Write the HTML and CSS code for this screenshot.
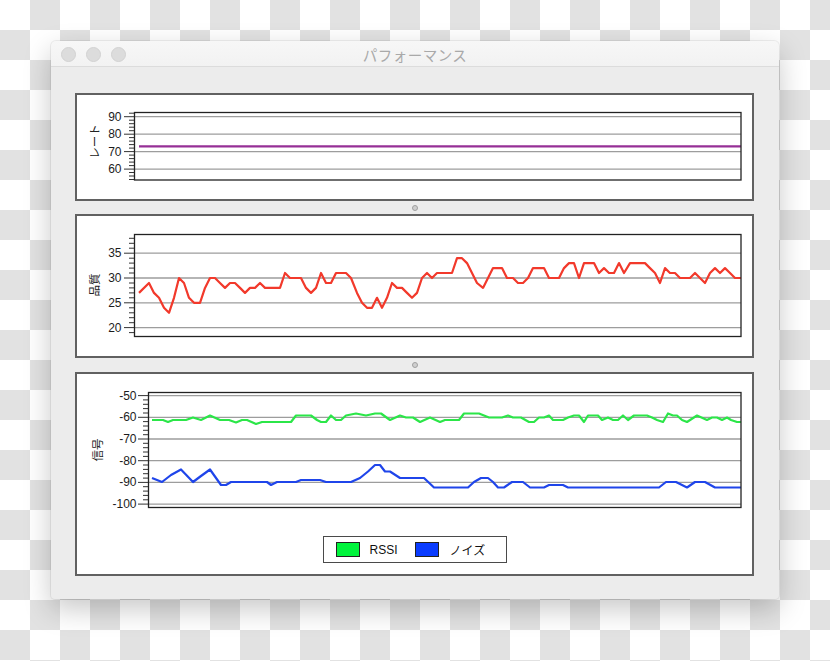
FILE: index.html
```html
<!DOCTYPE html>
<html lang="ja">
<head>
<meta charset="utf-8">
<title>パフォーマンス</title>
<link rel="stylesheet" href="styles.css">
</head>
<body>
<div class="stage">
  <div class="window">
    <div class="titlebar">
      <div class="lights">
        <span class="light"></span><span class="light"></span><span class="light"></span>
      </div>
      <div class="title">パフォーマンス</div>
      <div></div>
    </div>
    <div class="content">
      <section class="panel panel-rate">
        <svg class="chart" width="675" height="104" viewBox="77 95 675 104">
          <g class="grid">
            <line x1="134" x2="741" y1="116.7" y2="116.7"/>
            <line x1="134" x2="741" y1="134.2" y2="134.2"/>
            <line x1="134" x2="741" y1="151.6" y2="151.6"/>
            <line x1="134" x2="741" y1="169.1" y2="169.1"/>
          </g>
          <path class="ticks" d="M124 116.7H134M124 134.2H134M124 151.6H134M124 169.1H134
            M129 113.2H134M129 120.2H134M129 123.7H134M129 127.2H134M129 130.7H134
            M129 137.6H134M129 141.1H134M129 144.6H134M129 148.1H134
            M129 155.1H134M129 158.6H134M129 162.1H134M129 165.6H134
            M129 172.5H134M129 176H134M129 179.5H134"/>
          <g class="labels" text-anchor="end">
            <text x="121.5" y="116.7">90</text>
            <text x="121.5" y="134.2">80</text>
            <text x="121.5" y="151.6">70</text>
            <text x="121.5" y="169.1">60</text>
          </g>
          <text class="axis-title" x="94" y="141.5" transform="rotate(-90 94 141.5)">レート</text>
          <polyline class="line purple" points="139,146.3 741,146.3"/>
          <rect class="frame" x="134.5" y="112.5" width="606.5" height="67.5"/>
        </svg>
      </section>
      <div class="splitter"><span class="dot"></span></div>
      <section class="panel panel-quality">
        <svg class="chart" width="675" height="140" viewBox="77 216 675 140">
          <g class="grid">
            <line x1="134" x2="741" y1="253.2" y2="253.2"/>
            <line x1="134" x2="741" y1="278" y2="278"/>
            <line x1="134" x2="741" y1="302.8" y2="302.8"/>
            <line x1="134" x2="741" y1="327.6" y2="327.6"/>
          </g>
          <path class="ticks" d="M124 253.2H134M124 278H134M124 302.8H134M124 327.6H134
            M129 238.3H134M129 243.3H134M129 248.2H134
            M129 258.2H134M129 263.1H134M129 268.1H134M129 273H134
            M129 283H134M129 287.9H134M129 292.9H134M129 297.8H134
            M129 307.8H134M129 312.8H134M129 317.7H134M129 322.7H134
            M129 332.6H134"/>
          <g class="labels" text-anchor="end">
            <text x="121.5" y="253.2">35</text>
            <text x="121.5" y="278">30</text>
            <text x="121.5" y="302.8">25</text>
            <text x="121.5" y="327.6">20</text>
          </g>
          <text class="axis-title" x="94" y="285" transform="rotate(-90 94 285)">品質</text>
          <polyline class="line red" points="139,292.9 149,283 154,292.9 159,297.8 164,307.8 169,312.8 174,297.8 179,278 184,283 189,297.8 194,302.8 200,302.8 205,287.9 210,278 215,278 220,283 225,287.9 230,283 235,283 240,287.9 245,292.9 250,287.9 255,287.9 260,283 265,287.9 280,287.9 285,273 290,278 301,278 306,287.9 311,292.9 316,287.9 321,273 326,283 331,283 336,273 346,273 351,278 357,292.9 362,302.8 367,307.8 372,307.8 377,297.8 382,307.8 387,297.8 392,283 397,287.9 402,287.9 407,292.9 412,297.8 417,292.9 422,278 427,273 432,278 437,273 452,273 457,258.2 462,258.2 467,263.1 472,273 477,283 483,287.9 488,278 493,268.1 502,268.1 507,278 513,278 518,283 523,283 528,278 533,268.1 544,268.1 549,278 559,278 564,268.1 569,263.1 574,263.1 579,278 584,263.1 594,263.1 599,273 604,268.1 609,273 614,273 619,263.1 624,273 630,263.1 645,263.1 650,268.1 655,273 660,283 665,268.1 670,273 675,273 680,278 690,278 695,273 700,278 705,283 710,273 715,268.1 720,273 725,268.1 730,273 735,278 741,278"/>
          <rect class="frame" x="134.5" y="234.5" width="606.5" height="102"/>
        </svg>
      </section>
      <div class="splitter tall"><span class="dot"></span></div>
      <section class="panel panel-signal">
        <svg class="chart" width="675" height="162" viewBox="77 374 675 162">
          <g class="grid">
            <line x1="148" x2="741" y1="395.6" y2="395.6"/>
            <line x1="148" x2="741" y1="417.3" y2="417.3"/>
            <line x1="148" x2="741" y1="439" y2="439"/>
            <line x1="148" x2="741" y1="460.7" y2="460.7"/>
            <line x1="148" x2="741" y1="482.4" y2="482.4"/>
            <line x1="148" x2="741" y1="504.1" y2="504.1"/>
          </g>
          <path class="ticks" d="M138 395.6H148M138 417.3H148M138 439H148M138 460.7H148M138 482.4H148M138 504.1H148
            M143 399.9H148M143 404.3H148M143 408.6H148M143 413H148
            M143 421.6H148M143 426H148M143 430.3H148M143 434.7H148
            M143 443.3H148M143 447.7H148M143 452H148M143 456.4H148
            M143 465H148M143 469.4H148M143 473.7H148M143 478.1H148
            M143 486.7H148M143 491.1H148M143 495.4H148M143 499.8H148"/>
          <g class="labels" text-anchor="end">
            <text x="136.5" y="395.6">-50</text>
            <text x="136.5" y="417.3">-60</text>
            <text x="136.5" y="439">-70</text>
            <text x="136.5" y="460.7">-80</text>
            <text x="136.5" y="482.4">-90</text>
            <text x="136.5" y="504.1">-100</text>
          </g>
          <text class="axis-title" x="96.5" y="450" transform="rotate(-90 96.5 450)">信号</text>
          <polyline class="line green" points="152,420 163,420 168,422 173,420 186,420 193,417.5 201,420 210,415.5 220,420 229,420 236,422.5 242,420 247,420 256,424 262,422 291,422 296,415.5 311,415.5 317,420 321,422 326,422 331,415.5 336,420 341,420 346,415.5 356,413.5 366,415.5 375,413.5 381,413.5 390,420 400,415.5 406,417.5 413,417.5 420,422 430,417.5 440,422 445,420 459,420 464,413.5 479,413.5 489,417.5 502,417.5 508,415.5 513,417.5 521,417.5 529,422 534,422 539,417.5 544,417.5 549,415.5 553,420 563,420 568,417.5 574,415.5 579,415.5 584,422 588,415.5 598,415.5 602,420 608,417.5 613,420 618,420 623,415.5 628,420 634,415.5 647,415.5 652,417.5 657,420 663,422 668,413.5 673,415.5 677,415.5 682,420 687,422 697,415.5 707,420 712,417.5 717,417.5 722,420 727,417.5 731,420 737,422 741,422"/>
          <polyline class="line blue" points="152,478 162,482 171,475 181,469.5 193,482 201,476 210,469.5 221,485 226,485 231,482 267,482 271,485 277,482 296,482 301,480 320,480 326,482 351,482 360,478 368,471.5 375,465 380,465 385,471.5 390,471.5 400,478 424,478 434,487.5 468,487.5 474,482 481,478 488,478 493,482 498,487.5 504,487.5 512,482 523,482 530,487.5 544,487.5 549,485 563,485 568,487.5 659,487.5 666,482 676,482 687,487.5 695,482 705,482 715,487.5 741,487.5"/>
          <rect class="frame" x="148.5" y="392.5" width="592.5" height="115"/>
        </svg>
        <div class="legend">
          <span class="swatch swatch-rssi"></span><span class="legend-label">RSSI</span>
          <span class="swatch swatch-noise"></span><span class="legend-label">ノイズ</span>
        </div>
      </section>
    </div>
  </div>
</div>
</body>
</html>
```
FILE: styles.css
```css
html {
  background-color: #ffffff;
  background-image: repeating-conic-gradient(#e2e2e2 0 25%, #ffffff 0 50%);
  background-size: 60px 60px;
  background-position: 0 0;
}
body {
  margin: 0;
  min-height: 661px;
  font-family: "Liberation Sans", "Noto Sans CJK JP", sans-serif;
}
.stage {
  padding: 41px 0 0 51px;
}
.window {
  width: 728px;
  height: 558px;
  box-sizing: border-box;
  background: #ececec;
  border-radius: 5px 5px 4px 4px;
  box-shadow: 0 0 0 1px rgba(0,0,0,0.06), 0 10px 28px rgba(0,0,0,0.22);
  display: flex;
  flex-direction: column;
  overflow: hidden;
}
.titlebar {
  height: 25px;
  flex: none;
  background: linear-gradient(#f7f7f7, #f2f2f2);
  border-bottom: 1px solid #dcdcdc;
  display: grid;
  grid-template-columns: 1fr auto 1fr;
  align-items: center;
}
.lights {
  display: flex;
  gap: 10px;
  padding-left: 10px;
  padding-top: 2px;
}
.light {
  width: 13px;
  height: 13px;
  border-radius: 50%;
  background: #dcdcdc;
  border: 0.5px solid #d2d2d2;
}
.title {
  font-family: "Noto Sans CJK JP", sans-serif;
  font-size: 14.5px;
  color: #a9a9a9;
  padding-top: 2px;
  letter-spacing: 0.5px;
}
.content {
  flex: 1;
  padding: 26px 25px 23px 24px;
  display: flex;
  flex-direction: column;
}
.panel {
  background: #ffffff;
  border: 2px solid #616161;
  box-sizing: border-box;
  width: 679px;
}
.panel-rate { height: 108px; }
.panel-quality { height: 144px; }
.panel-signal {
  height: 204px;
  display: flex;
  flex-direction: column;
}
.chart {
  display: block;
  flex: none;
}
.splitter {
  height: 13px;
  display: flex;
  align-items: center;
  justify-content: center;
}
.splitter.tall { height: 14px; }
.dot {
  width: 6px;
  height: 6px;
  border-radius: 50%;
  background: #cfcfcf;
  border: 1px solid #a0a0a0;
  box-sizing: border-box;
}
.grid line {
  stroke: #9d9d9d;
  stroke-width: 1.3;
}
.ticks {
  stroke: #333;
  stroke-width: 1;
  fill: none;
}
.labels text {
  font-family: "Liberation Sans", sans-serif;
  font-size: 12px;
  fill: #1c1c1c;
  dominant-baseline: central;
}
.axis-title {
  font-family: "Noto Sans CJK JP", sans-serif;
  font-size: 11.5px;
  fill: #222;
  text-anchor: middle;
  dominant-baseline: central;
}
.frame {
  fill: none;
  stroke: #222;
  stroke-width: 1.3;
}
.line {
  fill: none;
  stroke-width: 2.2;
  stroke-linejoin: round;
}
.purple { stroke: #962f96; }
.red { stroke: #f2392b; }
.green { stroke: #2be648; }
.blue { stroke: #1f45ea; }
.legend {
  align-self: center;
  width: 184px;
  height: 27px;
  box-sizing: border-box;
  border: 1px solid #4a4a4a;
  display: flex;
  align-items: center;
  padding-left: 12px;
  font-family: "Liberation Sans", "Noto Sans CJK JP", sans-serif;
  font-size: 12px;
  color: #111;
}
.swatch {
  width: 24px;
  height: 15px;
  box-sizing: border-box;
  border: 1px solid #222;
}
.swatch-rssi { background: #00f43c; }
.swatch-noise { background: #0a3cff; margin-left: 17px; }
.legend-label { margin-left: 10px; }
.swatch-noise + .legend-label { margin-left: 11px; }
```
